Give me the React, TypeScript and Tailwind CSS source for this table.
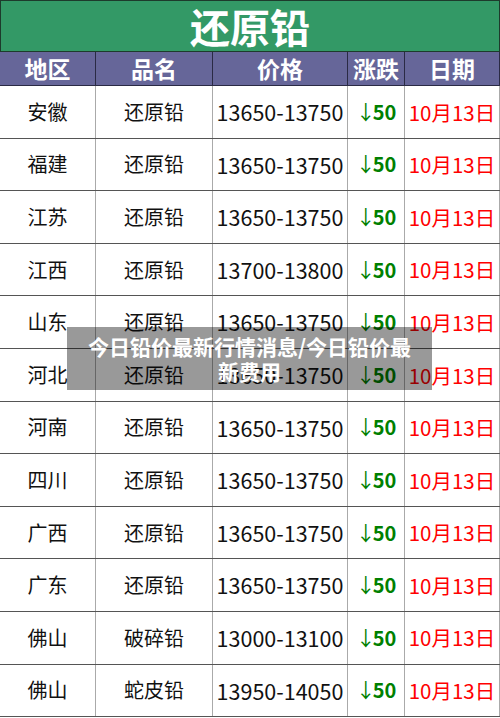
const rows = [
  ["安徽", "还原铅", "13650-13750"],
  ["福建", "还原铅", "13650-13750"],
  ["江苏", "还原铅", "13650-13750"],
  ["江西", "还原铅", "13700-13800"],
  ["山东", "还原铅", "13650-13750"],
  ["河北", "还原铅", "13650-13750"],
  ["河南", "还原铅", "13650-13750"],
  ["四川", "还原铅", "13650-13750"],
  ["广西", "还原铅", "13650-13750"],
  ["广东", "还原铅", "13650-13750"],
  ["佛山", "破碎铅", "13000-13100"],
  ["佛山", "蛇皮铅", "13950-14050"],
];

const cols = "grid grid-cols-[96px_117px_135px_57px_95px]";

export default function App() {
  return (
    <div
      className="relative w-[500px] h-[718px] overflow-hidden bg-white"
      style={{ fontFamily: '"Noto Sans CJK SC", "Noto Sans", sans-serif' }}
    >
      <div className="flex h-[52px] items-center justify-center border border-[#1d3b2c] bg-[#339966] text-[40px] font-bold leading-[48px] text-white">
        还原铅
      </div>

      <div className={cols + " h-[34px] border-b border-[#2a2a44] bg-[#666699] text-[23px] font-bold leading-none text-white"}>
        {["地区", "品名", "价格", "涨跌", "日期"].map((h) => (
          <div key={h} className="flex items-center justify-center border-r border-[#2a2a44]">
            {h}
          </div>
        ))}
      </div>

      {rows.map((r, i) => (
        <div
          key={i}
          className={cols + " h-[52.6px] border-b border-[#555] text-[20px] leading-none"}
        >
          <div className="flex items-center justify-center border-r border-[#aaa] text-[#111]">{r[0]}</div>
          <div className="flex items-center justify-center border-r border-[#aaa] text-[#111]">{r[1]}</div>
          <div className="flex items-center justify-center border-r border-[#aaa] text-[21.5px] text-[#111]">{r[2]}</div>
          <div className="flex items-center justify-center border-r border-[#aaa] font-bold text-[#008000]">
            <span className="mr-[-3px] font-normal">↓</span>50
          </div>
          <div className="flex items-center justify-center border-r border-[#aaa] text-[20.5px] text-[#ff0000]">10月13日</div>
        </div>
      ))}

      <div className="absolute left-[67px] top-[327px] flex h-[63px] w-[365px] items-center justify-center bg-black/40 px-4 text-center text-[21px] font-bold leading-[25px] text-white">
        今日铅价最新行情消息/今日铅价最新费用
      </div>
    </div>
  );
}
